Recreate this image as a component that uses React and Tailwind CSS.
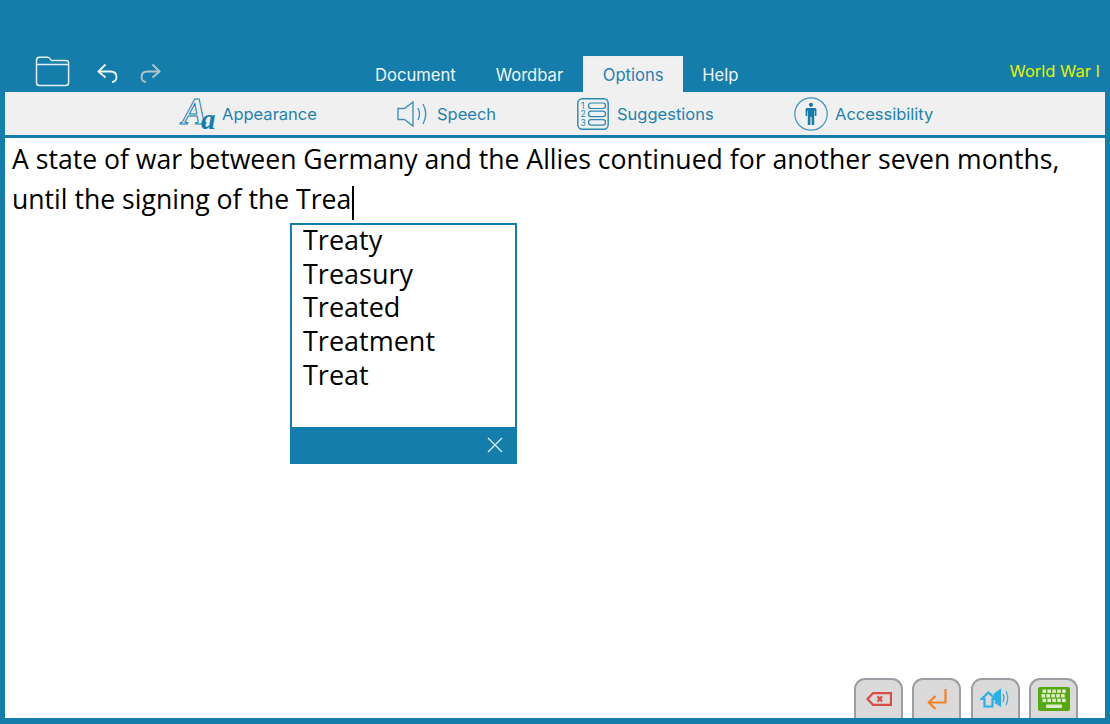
import React from 'react'

const suggestions = ['Treaty', 'Treasury', 'Treated', 'Treatment', 'Treat']
const uiFont = { fontFamily: 'Inter' }

function FolderIcon() {
  return (
    <svg width="35" height="31" viewBox="0 0 35 31" fill="none" stroke="#e4eff5" strokeWidth="1.5">
      <path d="M1.5 6V4.5Q1.5 1.2 4.5 1.2H12.5Q14 1.2 15 2.6L16.5 4.6H31Q33.6 4.6 33.6 7.2V26.5Q33.6 29.6 30.6 29.6H4.5Q1.5 29.6 1.5 26.5Z" />
      <path d="M1.5 8.6H33.6" />
    </svg>
  )
}

function UndoIcon({ color, flip }) {
  return (
    <svg width="21" height="20" viewBox="0 0 21 20" fill="none" stroke={color} strokeWidth="1.9" className={flip ? '-scale-x-100' : ''}>
      <path d="M8.5 1.5L1.5 8.5L8.5 14.5" />
      <path d="M1.5 8.5H13.5C17 8.5 19.5 10.5 19.5 14C19.5 17 17.5 19 15 19" />
    </svg>
  )
}

function AaIcon() {
  return (
    <svg width="36" height="34" viewBox="0 0 36 34" className="overflow-visible">
      <text x="2" y="27" fontFamily="Liberation Serif" fontStyle="italic" fontWeight="700" fontSize="38" fill="#f0f0f0" stroke="#147dab" strokeWidth="1">A</text>
      <text x="21" y="32" fontFamily="Liberation Serif" fontStyle="italic" fontWeight="700" fontSize="29" fill="#147dab">a</text>
    </svg>
  )
}

function SpeakerIcon() {
  return (
    <svg width="32" height="26" viewBox="0 0 32 26" fill="none" stroke="#3f93ba" strokeWidth="1.4">
      <path d="M1 7.5H7.5L16 1V25L7.5 18.5H1Z" />
      <path d="M21 7Q24 13 21 19" />
      <path d="M26 3Q31.5 13 26 23" />
    </svg>
  )
}

function ListIcon() {
  return (
    <svg width="32" height="32" viewBox="0 0 32 32" fill="none" stroke="#2b88b2" strokeWidth="1.2">
      <rect x="0.8" y="0.8" width="30.4" height="30.4" rx="4.5" strokeWidth="1.4" />
      <rect x="11.5" y="5" width="17" height="5.5" rx="2.7" />
      <rect x="11.5" y="13.2" width="17" height="5.5" rx="2.7" />
      <rect x="11.5" y="21.6" width="17" height="5.5" rx="2.7" />
      <text x="4" y="10.8" fontFamily="Inter" fontSize="8.5" fill="#2b88b2" stroke="none">1</text>
      <text x="3.6" y="19.2" fontFamily="Inter" fontSize="8.5" fill="#2b88b2" stroke="none">2</text>
      <text x="3.6" y="27.8" fontFamily="Inter" fontSize="8.5" fill="#2b88b2" stroke="none">3</text>
    </svg>
  )
}

function PersonIcon() {
  return (
    <svg width="34" height="34" viewBox="0 0 34 34" fill="none">
      <circle cx="17" cy="17" r="16.2" stroke="#3f93ba" strokeWidth="1.2" />
      <circle cx="17" cy="7.8" r="2.1" fill="#147dab" />
      <path d="M13 11H21Q22.4 11 22.4 12.4V19H20.8V14H20.2V28H17.6V20H16.4V28H13.8V14H13.2V19H11.6V12.4Q11.6 11 13 11Z" fill="#147dab" />
    </svg>
  )
}

function BackspaceIcon() {
  return (
    <svg width="26" height="14" viewBox="0 0 26 14" fill="none" stroke="#dc4b45" strokeWidth="2.2">
      <path d="M7 1.2H25V12.8H7L1.5 7Z" />
      <path d="M11.5 4.5L16 9.5M16 4.5L11.5 9.5" />
    </svg>
  )
}

function EnterIcon() {
  return (
    <svg width="20" height="21" viewBox="0 0 20 21" fill="none" stroke="#f5811f" strokeWidth="2.2">
      <path d="M18.5 0V13.5H2" />
      <path d="M8.5 7L1.8 13.5L8.5 20" />
    </svg>
  )
}

function SpeakShiftIcon() {
  return (
    <svg width="30" height="22" viewBox="0 0 30 22" fill="none" stroke="#2ab0e4" strokeWidth="2.2">
      <path d="M1.5 11L8.5 4.5L15.5 11H12.5V18.5H4.5V11Z" />
      <path d="M14 7L20 2.5V17L15 14" fill="#2ab0e4" />
      <path d="M23 6Q25 10 23 14" strokeWidth="1.2" />
      <path d="M26 3Q29.5 10 26 17" strokeWidth="1.2" />
    </svg>
  )
}

function KeyboardIcon() {
  const keys = []
  for (let r = 0; r < 3; r++) {
    for (let c = 0; c < 5; c++) {
      keys.push(<rect key={r + '-' + c} x={4.5 + c * 4.9 + (r === 1 ? -1 : 0)} y={2.5 + r * 4.6} width="3.6" height="3.4" fill="#dfeccd" />)
    }
  }
  return (
    <svg width="32" height="24" viewBox="0 0 32 24">
      <rect width="32" height="24" rx="2" fill="#55a90f" />
      {keys}
      <rect x="8" y="17.5" width="16" height="3.4" rx="1" fill="#dfeccd" />
    </svg>
  )
}

function ToolItem({ icon, label, className }) {
  return (
    <div className={'flex items-center ' + className}>
      {icon}
      <span className="pt-[2px] text-[16.5px] text-[#1f82ad]" style={uiFont}>{label}</span>
    </div>
  )
}

function KeyButton({ children }) {
  return (
    <div className="flex h-[40px] w-[49px] items-center justify-center rounded-t-[11px] border-2 border-b-0 border-[#9b9fa4] bg-[#dadada]">
      {children}
    </div>
  )
}

export default function App() {
  return (
    <div className="flex h-[724px] w-[1110px] flex-col overflow-hidden bg-[#147dab] px-[5px] pb-[6px]">
      <div className="flex h-[92px] items-end">
        <div className="mb-[5px] ml-[30px]"><FolderIcon /></div>
        <div className="mb-[9px] ml-[27px]"><UndoIcon color="#f0f5f8" /></div>
        <div className="mb-[9px] ml-[22px]"><UndoIcon color="#b4c4cc" flip /></div>
        <div className="ml-[214px] flex h-[36px] items-center text-[16.6px] text-[#f2f6f8]" style={uiFont}>
          <span className="pt-[3px]">Document</span>
          <span className="ml-[40px] pt-[3px]">Wordbar</span>
          <span className="ml-[20px] flex h-[36px] w-[100px] items-center justify-center border-t border-[#e4eef3] bg-[#f0f0f0] pt-[2px] text-[#1f82ad]">Options</span>
          <span className="ml-[19px] pt-[3px]">Help</span>
        </div>
        <span className="mb-[8px] ml-auto mr-[5px] text-[16.5px] text-[#e4f000]" style={uiFont}>World War I</span>
      </div>

      <div className="flex h-[43px] items-center bg-[#f0f0f0] pl-[175px]">
        <ToolItem icon={<AaIcon />} label="Appearance" className="w-[217px] gap-[6px]" />
        <ToolItem icon={<SpeakerIcon />} label="Speech" className="w-[180px] gap-[8px]" />
        <ToolItem icon={<ListIcon />} label="Suggestions" className="w-[217px] gap-[8px]" />
        <ToolItem icon={<PersonIcon />} label="Accessibility" className="gap-[7px]" />
      </div>

      <div className="relative mt-[3px] flex flex-1 flex-col bg-white">
        <p className="px-[7px] pt-[1px] text-[26.6px] leading-[40px] text-black" style={{ fontFamily: 'Open Sans' }}>
          A state of war between Germany and the Allies continued for another seven months,
          <br />
          until the signing of the Trea
          <span className="-mb-[11px] ml-px inline-block h-[34px] w-[2px] bg-black" />
        </p>

        <div className="absolute left-[285px] top-[85px] flex h-[241px] w-[227px] flex-col border-2 border-[#147dab] bg-white">
          <div className="-mt-[2px] flex-1 pl-[11px] text-[27px] leading-[33.7px] text-black" style={{ fontFamily: 'Open Sans' }}>
            {suggestions.map((word) => <div key={word}>{word}</div>)}
          </div>
          <div className="flex h-[35px] items-center justify-end bg-[#147dab] pr-[12px]">
            <svg width="16" height="16" viewBox="0 0 16 16" stroke="#e8f2f6" strokeWidth="1.2">
              <path d="M1 1L15 15M15 1L1 15" />
            </svg>
          </div>
        </div>

        <div className="mt-auto flex justify-end gap-[9.3px] pr-[27px]">
          <KeyButton><BackspaceIcon /></KeyButton>
          <KeyButton><EnterIcon /></KeyButton>
          <KeyButton><SpeakShiftIcon /></KeyButton>
          <KeyButton><KeyboardIcon /></KeyButton>
        </div>
      </div>
    </div>
  )
}
